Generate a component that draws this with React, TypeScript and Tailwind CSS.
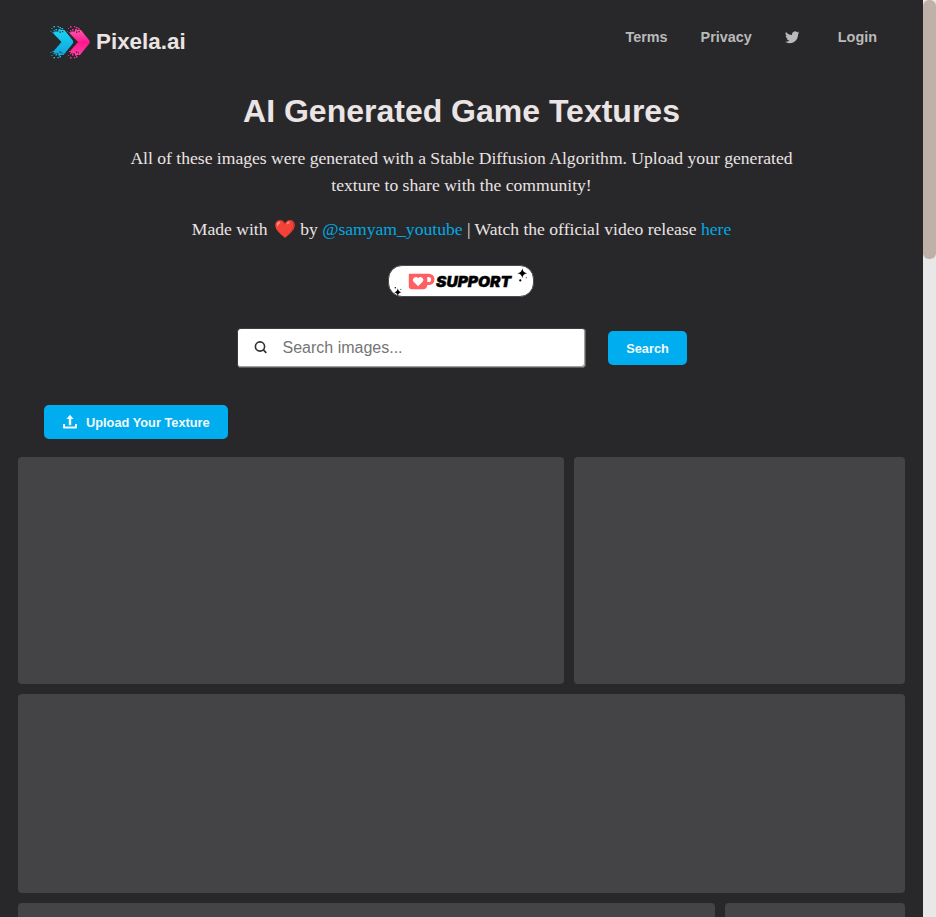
import React from "react";

const sans = "font-['Liberation_Sans',Arial,sans-serif]";
const serif = "font-['Liberation_Serif','Times_New_Roman',serif]";

function Chevron({ x, fill }: { x: number; fill: string }) {
  const specks = [
    [1, 3, 1], [3, 1, 1.5], [5, 4, 1.5], [7, 1, 1.3], [9, 2, 1.5], [3, 5, 1.2], [8, 4, 1.8], [0, 6, 0.9], [11, 3, 1.6], [2, 7, 1.1],
    [1, 30, 1], [3, 32, 1.5], [5, 29, 1.5], [7, 32, 1.3], [9, 31, 1.5], [3, 28, 1.2], [8, 29, 1.8], [0, 27, 0.9], [2, 26, 1.1],
  ];
  return (
    <g transform={`translate(${x} 0)`} fill={fill}>
      <path d="M4 6.500H8V5H14L22.300 15.600Q23.200 17 22.300 18.400L13 30H8V28.500H4.500L2.800 26.500L11 17L2.800 8.500Z" />
      {specks.map(([a, b, s], i) => (
        <rect key={i} x={a} y={b} width={s} height={s} />
      ))}
      <g fill="#28282a">
        <rect x="9" y="6.500" width="1.300" height="1.300" />
        <rect x="11.500" y="6" width="1.200" height="1.200" />
        <rect x="9" y="26.500" width="1.300" height="1.300" />
        <rect x="11" y="27.500" width="1" height="1" />
      </g>
    </g>
  );
}

function Logo() {
  return (
    <svg width="40" height="34" viewBox="0 0 40 34">
      <defs>
        <linearGradient id="cyan" x1="0" y1="0" x2="0" y2="1">
          <stop offset="0" stopColor="#19d3ee" />
          <stop offset="1" stopColor="#10a5df" />
        </linearGradient>
        <linearGradient id="pink" x1="0" y1="0" x2="0" y2="1">
          <stop offset="0" stopColor="#ff55ac" />
          <stop offset="0.5" stopColor="#ff178f" />
          <stop offset="1" stopColor="#ff3da0" />
        </linearGradient>
      </defs>
      <Chevron x={17} fill="url(#pink)" />
      <path d="M15 5L24.500 17L15 30" fill="none" stroke="#28282a" strokeWidth="1.500" />
      <Chevron x={0.5} fill="url(#cyan)" />
    </svg>
  );
}

function Header() {
  return (
    <header className={`flex h-[84px] items-start justify-between pl-[50px] pr-[46px] ${sans}`}>
      <a className="mt-[25px] flex items-center gap-[6px]">
        <Logo />
        <span className="text-[22.4px] leading-[34px] font-bold text-[#ebe4e4]">Pixela.ai</span>
      </a>
      <nav className="mt-[27px] flex h-5 items-center text-[14.4px] leading-5 font-bold text-[#bababa]">
        <a className="mr-[33px]">Terms</a>
        <a className="mr-[33px]">Privacy</a>
        <svg className="mr-[38.500px]" width="14.500" height="14.500" viewBox="0 0 24 24" fill="currentColor">
          <path d="M23.95 4.57a10 10 0 0 1-2.82.78 4.96 4.96 0 0 0 2.16-2.73c-.95.56-2 .96-3.13 1.19a4.92 4.92 0 0 0-8.38 4.48C7.69 8.1 4.07 6.13 1.64 3.16a4.93 4.93 0 0 0 1.52 6.57 4.9 4.9 0 0 1-2.23-.61v.06a4.92 4.92 0 0 0 3.95 4.83 5 5 0 0 1-2.21.08 4.94 4.94 0 0 0 4.6 3.42A9.87 9.87 0 0 1 0 19.54a13.99 13.99 0 0 0 7.55 2.21c9.05 0 14-7.5 14-13.98l-.02-.64a10 10 0 0 0 2.42-2.56Z" />
        </svg>
        <a>Login</a>
      </nav>
    </header>
  );
}

function SupportButton() {
  return (
    <a className="mr-px flex h-8 w-[146px] items-center rounded-[14px] border border-[#4b4b4c] bg-white">
      <svg width="144" height="30" viewBox="0 0 144 30">
        <g transform="translate(.8 .2)">
          <path fill="#ff5e62" fillRule="evenodd" d="M20 7.500H39A5.700 5.700 0 0 1 39 18.900H37.500Q37 23 34 23H22Q19 23 19 20V8.500Q19 7.500 20 7.500ZM37.500 10.700V15.900H38.700A2.600 2.600 0 0 0 38.700 10.700Z" />
          <path fill="#fff" d="M28.300 20L23.800 15.500A2.800 2.800 0 0 1 28.300 12A2.800 2.800 0 0 1 32.800 15.500Z" />
          <text x="46.300" y="20.400" textLength="75" lengthAdjust="spacingAndGlyphs" fontFamily="Inter, sans-serif" fontSize="14" fontWeight="900" fontStyle="italic" fill="#000" stroke="#000" strokeWidth=".4">SUPPORT</text>
          <path d="M132.5 2Q133 6.5 137.5 7Q133 7.500 132.500 12Q132 7.500 127.500 7Q132 6.500 132.500 2ZM8 22Q8.500 25.500 11.500 26Q8.500 26.500 8 30Q7.500 26.500 4.500 26Q7.500 25.500 8 22Z" />
          <circle cx="130.500" cy="14.200" r="1.100" />
          <circle cx="136.500" cy="11.500" r=".5" />
          <circle cx="5.500" cy="21.500" r=".7" />
          <circle cx="11" cy="23" r=".5" />
        </g>
      </svg>
    </a>
  );
}

function Hero() {
  return (
    <section className="flex flex-col items-center text-center text-[#ebe4e4]">
      <h1 className={`mt-[7px] text-[32px] leading-[40px] font-bold ${sans}`}>AI Generated Game Textures</h1>
      <div className={`mt-[14px] text-[17.6px] leading-[27px] ${serif}`}>
        <p>
          All of these images were generated with a Stable Diffusion Algorithm. Upload your generated
          <br />
          texture to share with the community!
        </p>
        <p className="mt-[17px]">
          Made with <span className="ml-[2px] font-['Noto_Color_Emoji']">❤️</span> by <a className="text-[#00a8e4]">@samyam_youtube</a> | Watch the official video release{" "}
          <a className="text-[#00a8e4]">here</a>
        </p>
      </div>
      <div className="mt-[22px]">
        <SupportButton />
      </div>
    </section>
  );
}

function SearchBar() {
  return (
    <form className={`mt-[31px] flex items-center pl-[237px] ${sans}`}>
      <label className="flex h-10 w-[349px] items-center rounded-[4px] border border-t-[#3c3c3e] border-l-[#3c3c3e] border-r-[#5c5c5c] border-b-[#5c5c5c] bg-white pl-[15px] shadow-[inset_-1px_-1px_0_#a0a0a0]">
        <svg width="16" height="16" viewBox="0 0 16 16" fill="none" stroke="#303030" strokeWidth="1.6">
          <circle cx="7" cy="6.500" r="4.600" />
          <path d="M10.300 9.900L13.300 12.900" />
        </svg>
        <input className="ml-[13.500px] w-[250px] text-[16px] outline-none placeholder:text-[#757575]" placeholder="Search images..." />
      </label>
      <button type="button" className="ml-[22px] h-[34px] w-[79px] rounded-[5px] bg-[#00adef] pt-[2px] text-[12.8px] font-bold text-[#f2f8f8]">
        Search
      </button>
    </form>
  );
}

function Gallery() {
  return (
    <section className="mt-[18px] flex flex-col gap-[10px] px-[18px]">
      <div className="flex gap-[10px]">
        <div className="h-[227px] w-[546px] rounded-[4px] bg-[#444446]" />
        <div className="h-[227px] flex-1 rounded-[4px] bg-[#444446]" />
      </div>
      <div className="h-[199px] rounded-[4px] bg-[#444446]" />
      <div className="flex gap-[10px]">
        <div className="h-[200px] w-[697px] rounded-[4px] bg-[#444446]" />
        <div className="h-[200px] flex-1 rounded-[4px] bg-[#444446]" />
      </div>
    </section>
  );
}

export default function App() {
  return (
    <div className="flex h-[917px] w-[936px] overflow-hidden bg-[#28282a]">
      <main className="h-full w-[923px] overflow-hidden">
        <Header />
        <Hero />
        <SearchBar />
        <button className={`mt-[37px] ml-[44px] flex h-[34px] w-[184px] items-center rounded-[5px] bg-[#00adef] pl-[18px] text-[12.8px] font-bold text-[#f2f8f8] ${sans}`}>
          <svg width="16" height="16" viewBox="0 0 16 16" fill="none" stroke="currentColor" strokeWidth="2" strokeLinejoin="round">
            <path d="M2 10V13.500H14V10" />
            <path d="M8 11.200V4" strokeWidth="2.400" />
            <path d="M8 .700L11.600 5H4.400Z" fill="currentColor" stroke="none" />
          </svg>
          <span className="ml-[8px] pt-px">Upload Your Texture</span>
        </button>
        <Gallery />
      </main>
      <aside className="h-full w-[13px] bg-[#e8e8e8]">
        <div className="h-[259px] rounded-[6px] bg-[#bfb0a8]" />
      </aside>
    </div>
  );
}
